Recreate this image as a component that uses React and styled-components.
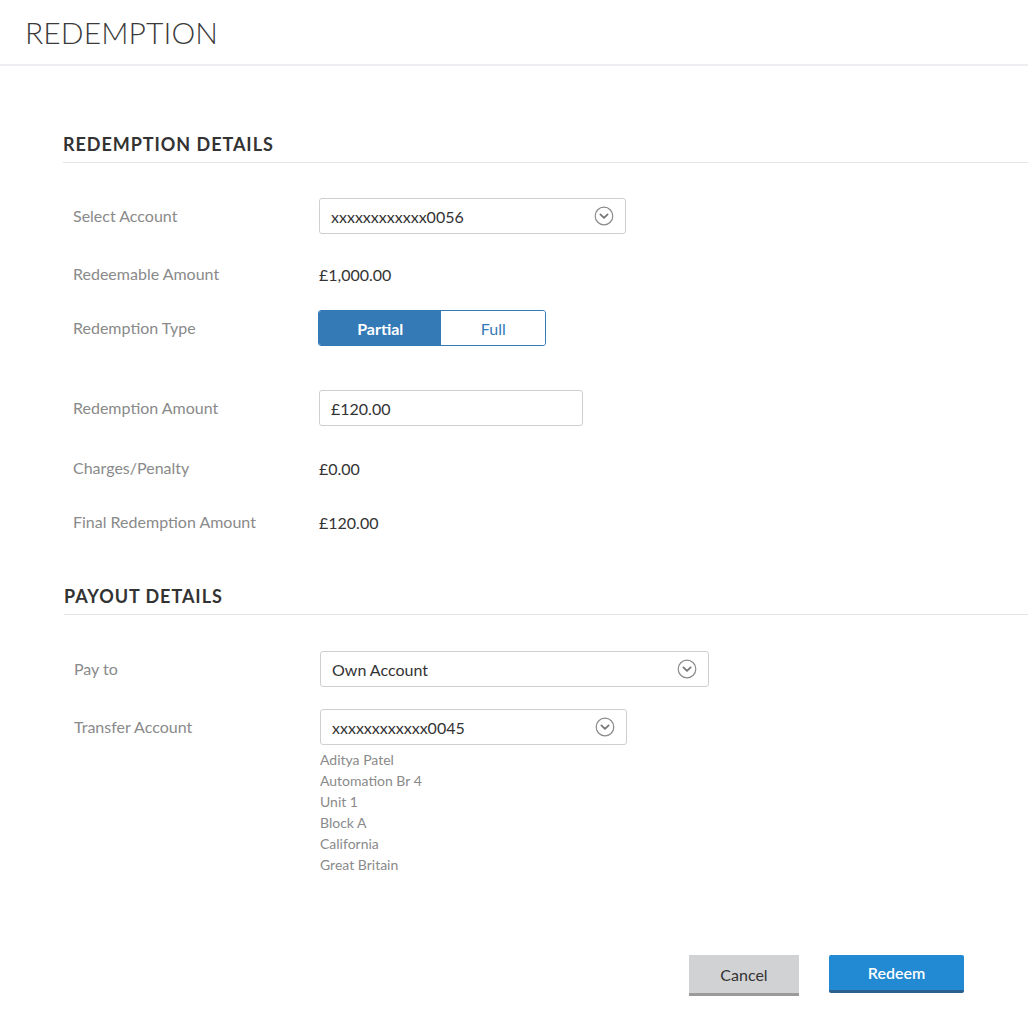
import React from 'react';
import styled, { createGlobalStyle } from 'styled-components';

const Global = createGlobalStyle`
  body {
    margin: 0;
    background: #fff;
    font-family: Lato, "Open Sans", sans-serif;
    color: #333;
  }
`

const Header = styled.div`
  height: 64px;
  border-bottom: 2px solid #ededf2;
  display: flex;
  align-items: center;
  padding-left: 25px;
`

const Title = styled.h1`
  margin: 0;
  font-weight: 300;
  font-size: 30px;
  letter-spacing: 0.1px;
  color: #3a3a3a;
`

const Section = styled.div`
  padding-left: ${p => p.shift ? 64 : 63}px;
  margin-top: ${p => p.top}px;
`

const Heading = styled.h2`
  margin: 0;
  font-size: 18px;
  line-height: 24px;
  font-weight: 700;
  letter-spacing: 0.95px;
  color: #333;
  padding-bottom: 6px;
  border-bottom: 1px solid #e5e5e5;
`

const Row = styled.div`
  display: flex;
  align-items: ${p => p.top ? 'flex-start' : 'center'};
  min-height: 36px;
  margin-top: ${p => p.gap}px;
`

const Label = styled.div`
  width: 256px;
  padding-left: 10px;
  box-sizing: border-box;
  font-size: 16px;
  line-height: 36px;
  color: #8a8a8a;
`

const Value = styled.div`
  font-size: 16px;
  color: #333;
`

const Field = styled.div`
  width: ${p => p.w}px;
  height: 36px;
  box-sizing: border-box;
  border: 1px solid #cfcfcf;
  border-radius: 3px;
  display: flex;
  align-items: center;
  justify-content: space-between;
  padding: 0 11px 0 11px;
  font-size: 16px;
  color: #333;
  background: #fff;
`

const Toggle = styled.div`
  display: flex;
  width: 228px;
  height: 36px;
  margin-left: -1px;
  box-sizing: border-box;
  border: 1px solid #337ab7;
  border-radius: 3px;
  overflow: hidden;
`

const ToggleOpt = styled.div`
  width: ${p => p.w}px;
  display: flex;
  align-items: center;
  justify-content: center;
  font-size: 16px;
  font-weight: ${p => p.active ? 700 : 400};
  background: ${p => p.active ? '#337ab7' : '#fff'};
  color: ${p => p.active ? '#fff' : '#337ab7'};
`

const Column = styled.div`
  display: flex;
  flex-direction: column;
`

const Address = styled.div`
  margin-top: 4px;
  font-size: 14px;
  line-height: 21px;
  color: #8a8a8a;
`

const Actions = styled.div`
  display: flex;
  justify-content: flex-end;
  align-items: flex-start;
  gap: 30px;
  padding-right: 64px;
  margin-top: 80px;
`

const Button = styled.button`
  width: ${p => p.primary ? 135 : 110}px;
  height: ${p => p.primary ? 38 : 41}px;
  border: none;
  border-radius: ${p => p.primary ? '2px' : '0'};
  border-bottom: ${p => p.primary ? '3px solid #2b5f8e' : '3px solid #9a9a9a'};
  background: ${p => p.primary ? '#2289d3' : '#d1d2d4'};
  color: ${p => p.primary ? '#fff' : '#333'};
  font-family: Lato, sans-serif;
  font-size: 16px;
  font-weight: ${p => p.primary ? 600 : 400};
  padding: 0;
  box-sizing: border-box;
`

const Chevron = () => (
  <svg width="20" height="20" viewBox="0 0 20 20">
    <circle cx="10" cy="10" r="8.8" fill="none" stroke="#8a8a8a" strokeWidth="1.2" />
    <path d="M6.4 8.4 L10 11.9 L13.6 8.4" fill="none" stroke="#777" strokeWidth="1.8" strokeLinecap="round" strokeLinejoin="round" />
  </svg>
)

function Select({ w, children }) {
  return (
    <Field w={w}>
      <span>{children}</span>
      <Chevron />
    </Field>
  )
}

export default function App() {
  return (
    <>
      <Global />
      <Header>
        <Title>REDEMPTION</Title>
      </Header>

      <Section top={66}>
        <Heading>REDEMPTION DETAILS</Heading>
        <Row gap={35}>
          <Label>Select Account</Label>
          <Select w={307}>xxxxxxxxxxxx0056</Select>
        </Row>
        <Row gap={22}>
          <Label>Redeemable Amount</Label>
          <Value>£1,000.00</Value>
        </Row>
        <Row gap={18}>
          <Label>Redemption Type</Label>
          <Toggle>
            <ToggleOpt active w={123}>Partial</ToggleOpt>
            <ToggleOpt w={104}>Full</ToggleOpt>
          </Toggle>
        </Row>
        <Row gap={44}>
          <Label>Redemption Amount</Label>
          <Field w={264}>£120.00</Field>
        </Row>
        <Row gap={24}>
          <Label>Charges/Penalty</Label>
          <Value>£0.00</Value>
        </Row>
        <Row gap={18}>
          <Label>Final Redemption Amount</Label>
          <Value>£120.00</Value>
        </Row>
      </Section>

      <Section top={44} shift>
        <Heading>PAYOUT DETAILS</Heading>
        <Row gap={36}>
          <Label>Pay to</Label>
          <Select w={389}>Own Account</Select>
        </Row>
        <Row gap={22} top>
          <Label>Transfer Account</Label>
          <Column>
            <Select w={307}>xxxxxxxxxxxx0045</Select>
            <Address>
              <div>Aditya Patel</div>
              <div>Automation Br 4</div>
              <div>Unit 1</div>
              <div>Block A</div>
              <div>California</div>
              <div>Great Britain</div>
            </Address>
          </Column>
        </Row>
      </Section>

      <Actions>
        <Button>Cancel</Button>
        <Button primary>Redeem</Button>
      </Actions>
    </>
  );
}
